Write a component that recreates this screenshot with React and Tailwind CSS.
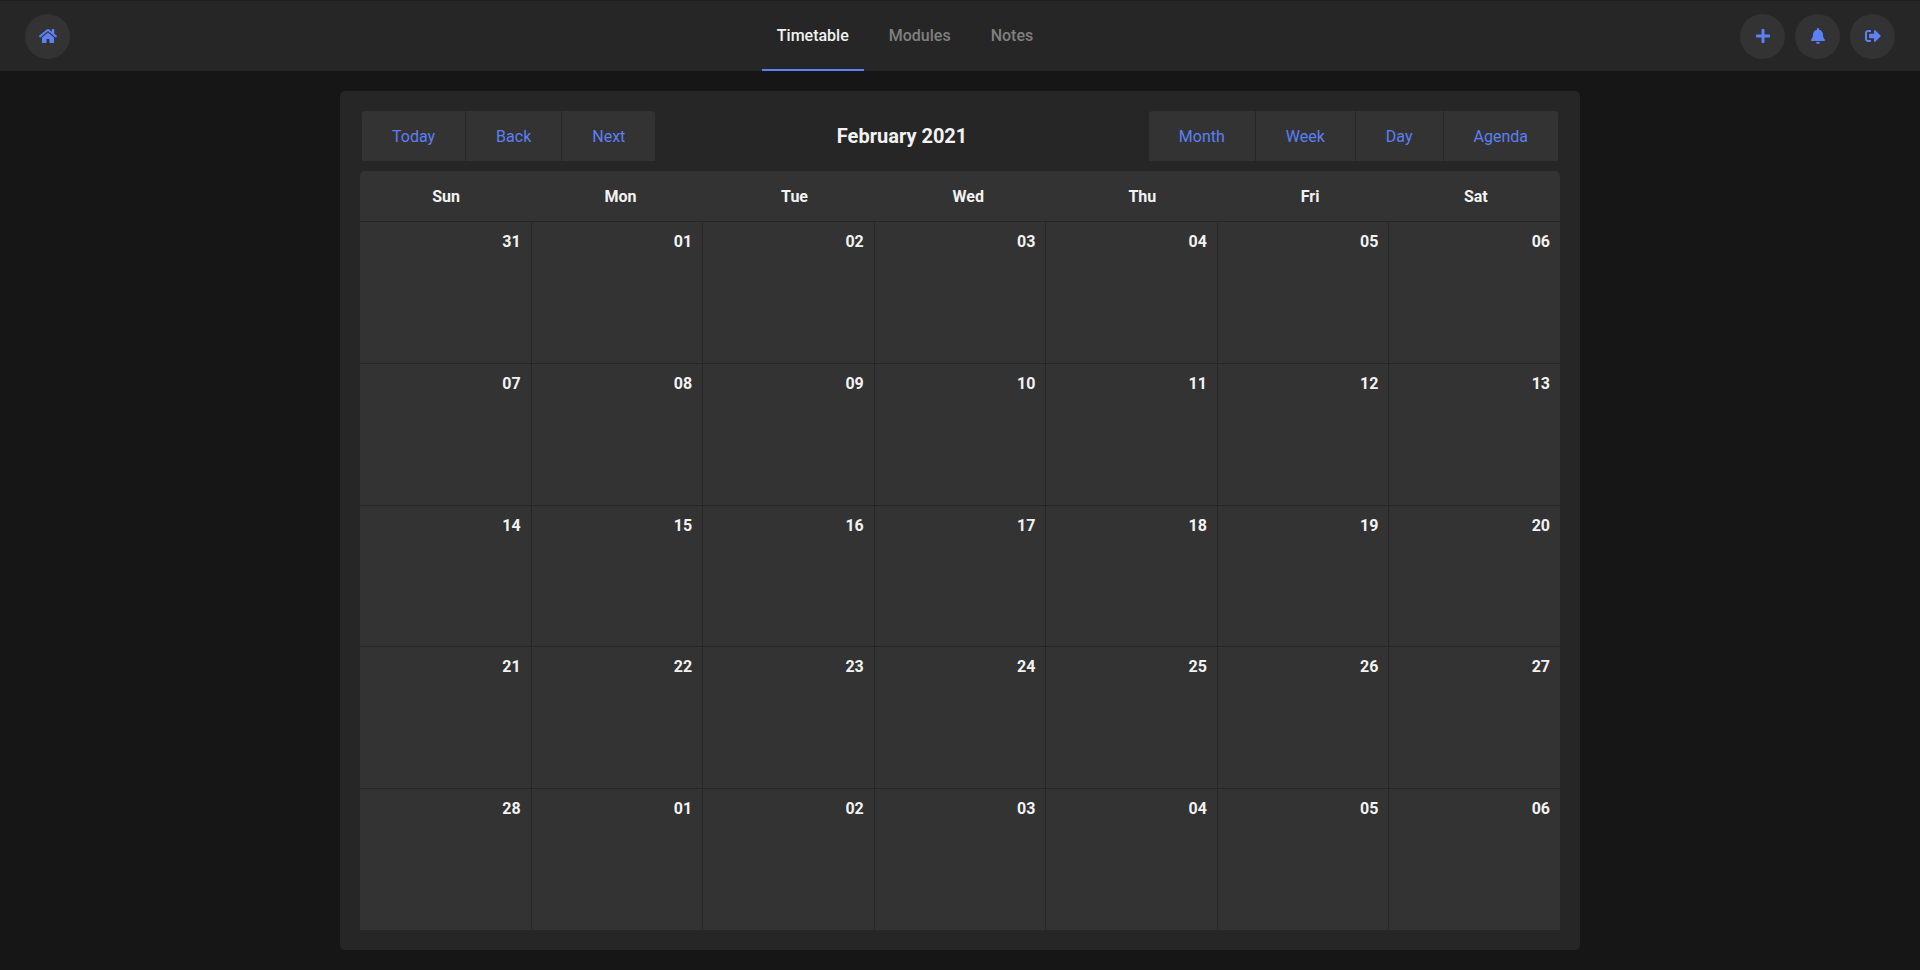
import { FaHome, FaPlus, FaBell, FaSignOutAlt } from "react-icons/fa";

const tabs = ["Timetable", "Modules", "Notes"];
const weekdays = ["Sun", "Mon", "Tue", "Wed", "Thu", "Fri", "Sat"];
const weeks = [
  ["31", "01", "02", "03", "04", "05", "06"],
  ["07", "08", "09", "10", "11", "12", "13"],
  ["14", "15", "16", "17", "18", "19", "20"],
  ["21", "22", "23", "24", "25", "26", "27"],
  ["28", "01", "02", "03", "04", "05", "06"],
];

function IconButton({ label, icon: Icon }) {
  return (
    <button
      type="button"
      aria-label={label}
      className="flex size-[45px] items-center justify-center rounded-full bg-[#333333] text-[#5c80f5]"
    >
      <Icon aria-hidden="true" className="h-4 w-[18px]" />
    </button>
  );
}

function ButtonGroup({ items }) {
  return (
    <div className="flex gap-px">
      {items.map((item) => (
        <button
          key={item}
          type="button"
          className="h-[50px] bg-[#333333] px-[30px] pt-0.5 text-[#5c80f5] first:rounded-tl-[4px] last:rounded-tr-[4px]"
        >
          {item}
        </button>
      ))}
    </div>
  );
}

function Calendar() {
  return (
    <section className="flex w-full max-w-[1240px] flex-col rounded-[5px] bg-[#262626] p-5">
      <div className="mb-2.5 flex items-center justify-between px-0.5">
        <ButtonGroup items={["Today", "Back", "Next"]} />
        <h1 className="text-xl font-bold text-[#f2f2f2]">February 2021</h1>
        <ButtonGroup items={["Month", "Week", "Day", "Agenda"]} />
      </div>
      <table className="flex flex-1 flex-col font-bold text-[#f2f2f2]">
        <thead className="block">
          <tr className="flex h-[50px] items-center rounded-t-[5px] bg-[#333333] pt-0.5">
            {weekdays.map((day) => (
              <th key={day} scope="col" className="flex-auto">
                {day}
              </th>
            ))}
          </tr>
        </thead>
        <tbody className="flex flex-1 flex-col">
          {weeks.map((week) => (
            <tr key={week[0]} className="flex flex-1 border-t border-[#262626]">
              {week.map((date, i) => (
                <td
                  key={i}
                  className="flex-1 border-r border-[#262626] bg-[#333333] px-2.5 py-2 text-right last:border-r-0"
                >
                  {date}
                </td>
              ))}
            </tr>
          ))}
        </tbody>
      </table>
    </section>
  );
}

export default function App() {
  return (
    <div className="flex min-h-screen flex-col bg-[#161616] font-['Roboto',sans-serif] text-base">
      <header className="flex h-[71px] items-center justify-between border-t border-[#202020] bg-[#262626] px-[25px]">
        <IconButton label="Home" icon={FaHome} />
        <nav className="flex h-full gap-2.5 font-medium">
          {tabs.map((tab, i) => (
            <a
              key={tab}
              href={"#" + tab.toLowerCase()}
              aria-current={i === 0 ? "page" : undefined}
              className="flex items-center border-b-2 border-transparent px-[15px] pt-0.5 text-[#808080] aria-[current=page]:border-[#5c80f5] aria-[current=page]:text-[#f2f2f2]"
            >
              {tab}
            </a>
          ))}
        </nav>
        <div className="flex gap-2.5">
          <IconButton label="Add" icon={FaPlus} />
          <IconButton label="Notifications" icon={FaBell} />
          <IconButton label="Sign out" icon={FaSignOutAlt} />
        </div>
      </header>
      <main className="flex flex-1 justify-center p-5">
        <Calendar />
      </main>
    </div>
  );
}
